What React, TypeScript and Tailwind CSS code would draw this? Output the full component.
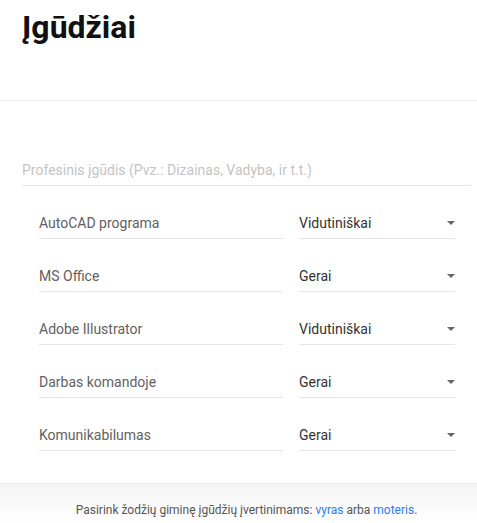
import React from "react";

const rows = [
  { name: "AutoCAD programa", level: "Vidutiniškai" },
  { name: "MS Office", level: "Gerai" },
  { name: "Adobe Illustrator", level: "Vidutiniškai" },
  { name: "Darbas komandoje", level: "Gerai" },
  { name: "Komunikabilumas", level: "Gerai" },
];

export default function App() {
  return (
    <div className="w-[477px] h-[523px] bg-white flex flex-col overflow-hidden" style={{ fontFamily: "Roboto, 'Noto Sans', sans-serif" }}>
      <div className="h-[101px] border-b border-[#ebebeb] px-[22px] pt-[7px]">
        <h1 className="text-[32px] leading-[40px] font-bold text-[#111]">Įgūdžiai</h1>
      </div>
      <div className="flex-1 flex flex-col">
        <div className="mt-[53px] ml-[22px] mr-[6px] h-[32px] flex items-center border-b border-[#e6e6e6] text-[14px] text-[#c4c4c4] pt-[2px]">
          Profesinis įgūdis (Pvz.: Dizainas, Vadyba, ir t.t.)
        </div>
        <div className="flex flex-col gap-[21px] mt-[21px] pl-[39px] pr-[22px]">
          {rows.map((r) => (
            <div key={r.name} className="flex gap-[16px] h-[32px]">
              <div className="w-[244px] flex items-center border-b border-[#e6e6e6] text-[14px] text-[#616161] pt-[2px]">
                {r.name}
              </div>
              <div className="flex-1 flex items-center justify-between border-b border-[#e6e6e6] text-[14px] text-[#333] pt-[2px]">
                <span>{r.level}</span>
                <svg width="10" height="5" viewBox="0 0 10 5" className="mr-[-1px]">
                  <path d="M1 0 L9 0 L5 4 Z" fill="#666" />
                </svg>
              </div>
            </div>
          ))}
        </div>
      </div>
      <div className="h-[40px] border-t border-[#ececec] bg-gradient-to-b from-[#f4f4f4] to-white flex items-center justify-center text-[12px] text-[#555] pt-[13px] pl-[16px]">
        <span>
          Pasirink žodžių giminę įgūdžių įvertinimams: <span className="text-[#2b7bf3]">vyras</span> arba{" "}
          <span className="text-[#2b7bf3]">moteris</span>.
        </span>
      </div>
    </div>
  );
}
